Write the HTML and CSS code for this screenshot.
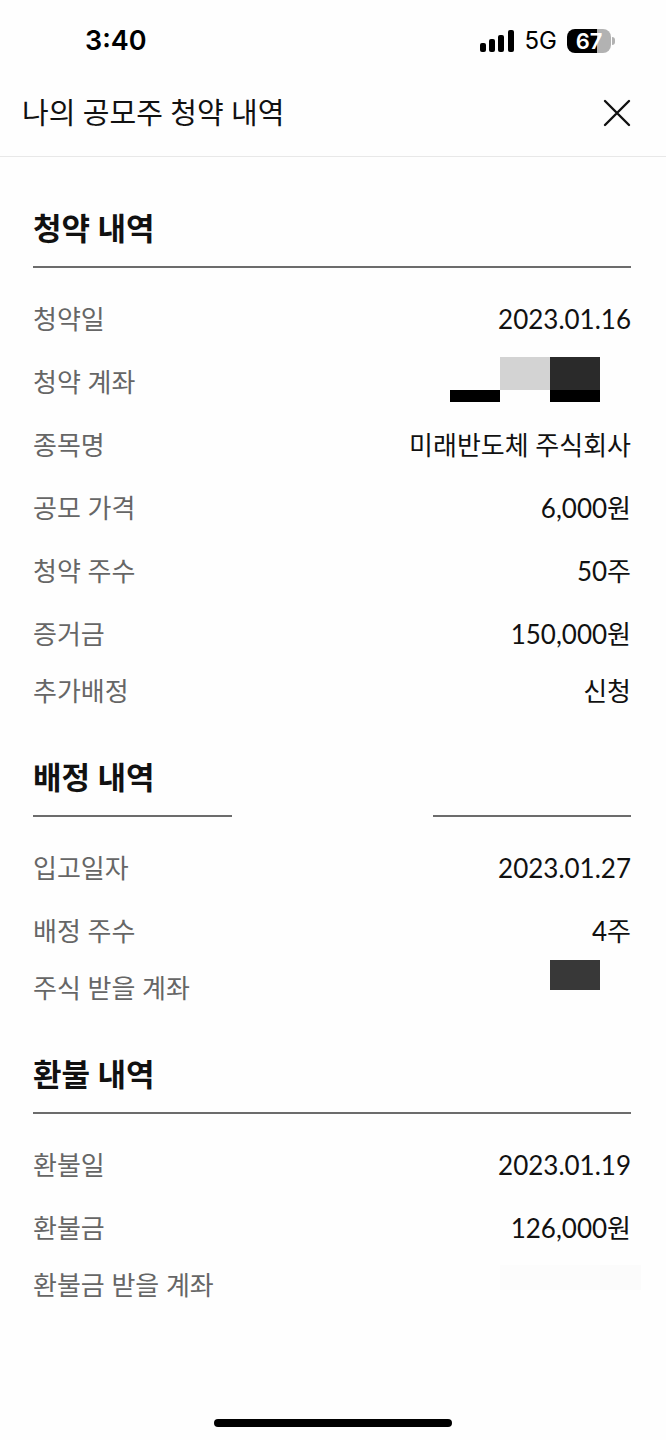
FILE: index.html
```html
<!DOCTYPE html>
<html lang="ko">
<head>
<meta charset="utf-8">
<meta name="viewport" content="width=device-width, initial-scale=1">
<title>나의 공모주 청약 내역</title>
<link rel="stylesheet" href="styles.css">
</head>
<body>
<div class="screen">
  <div class="status">
    <span class="time">3:40</span>
    <div class="indicators">
      <svg class="signal" width="34" height="22" viewBox="0 0 34 22" aria-hidden="true">
        <rect x="0" y="13" width="6" height="9" rx="2"/>
        <rect x="9" y="9" width="6" height="13" rx="2"/>
        <rect x="18" y="5" width="6" height="17" rx="2"/>
        <rect x="28" y="0" width="6" height="22" rx="2"/>
      </svg>
      <span class="network">5G</span>
      <div class="battery"><span class="level">67</span><span class="tip"></span></div>
    </div>
  </div>

  <header class="header">
    <h1 class="title">나의 공모주 청약 내역</h1>
    <button class="close" type="button" aria-label="닫기">
      <svg width="28" height="28" viewBox="0 0 28 28" aria-hidden="true"><path d="M2 2L26 26M26 2L2 26"/></svg>
    </button>
  </header>

  <main class="content">
    <section class="section">
      <h2 class="heading">청약 내역</h2>
      <dl class="list">
        <div class="row"><dt>청약일</dt><dd>2023.01.16</dd></div>
        <div class="row"><dt>청약 계좌</dt>
          <dd class="masked"><svg width="150" height="50" viewBox="0 0 150 50" shape-rendering="crispEdges" aria-hidden="true">
            <rect x="50" width="50" height="33" fill="#d3d3d3"/><rect x="100" width="50" height="33" fill="#2a2a2a"/>
            <rect y="33" width="50" height="12"/><rect x="100" y="33" width="50" height="12"/>
          </svg></dd></div>
        <div class="row"><dt>종목명</dt><dd>미래반도체 주식회사</dd></div>
        <div class="row"><dt>공모 가격</dt><dd>6,000원</dd></div>
        <div class="row"><dt>청약 주수</dt><dd>50주</dd></div>
        <div class="row"><dt>증거금</dt><dd>150,000원</dd></div>
        <div class="row"><dt>추가배정</dt><dd>신청</dd></div>
      </dl>
    </section>

    <section class="section">
      <h2 class="heading split">배정 내역</h2>
      <dl class="list">
        <div class="row"><dt>입고일자</dt><dd>2023.01.27</dd></div>
        <div class="row"><dt>배정 주수</dt><dd>4주</dd></div>
        <div class="row"><dt>주식 받을 계좌</dt>
          <dd class="masked"><svg width="50" height="56" viewBox="0 0 50 56" shape-rendering="crispEdges" aria-hidden="true"><rect width="50" height="30" fill="#383838"/></svg></dd></div>
      </dl>
    </section>

    <section class="section">
      <h2 class="heading">환불 내역</h2>
      <dl class="list">
        <div class="row"><dt>환불일</dt><dd>2023.01.19</dd></div>
        <div class="row"><dt>환불금</dt><dd>126,000원</dd></div>
        <div class="row"><dt>환불금 받을 계좌</dt>
          <dd class="masked wide"><svg width="141" height="42" viewBox="0 0 141 42" shape-rendering="crispEdges" aria-hidden="true"><rect y="1" width="100" height="25" fill="#fcfcfc"/><rect x="100" y="1" width="41" height="25" fill="#fbfbfb"/></svg></dd></div>
      </dl>
    </section>
  </main>

  <div class="home"></div>
</div>
</body>
</html>
```
FILE: styles.css
```css
* { box-sizing: border-box; }
body {
  margin: 0;
  background: #fefefe;
  color: #111;
  font-family: Lato, "Noto Sans CJK KR", sans-serif;
  font-size: 26px;
  line-height: 34px;
}
.screen {
  display: flex;
  flex-direction: column;
  min-height: 100vh;
}
.status {
  display: flex;
  align-items: center;
  justify-content: space-between;
  height: 69px;
  padding: 12px 51px 0 85px;
  color: #000;
  font-family: Inter, sans-serif;
}
.time { font-size: 27px; font-weight: 600; }
.indicators { display: flex; align-items: center; }
.signal { margin-right: 11px; }
.network { margin-right: 10px; font-size: 24px; }
.battery { display: flex; align-items: center; gap: 1px; }
.level {
  width: 44px;
  height: 24px;
  border-radius: 8px;
  background: linear-gradient(to right, #000 68%, #b2b2b2 68%);
  color: #fff;
  font-size: 22px;
  font-weight: 600;
  line-height: 24px;
  text-align: center;
}
.tip {
  width: 3px;
  height: 8px;
  border-radius: 0 3px 3px 0;
  background: #b2b2b2;
}
.header {
  display: flex;
  align-items: center;
  justify-content: space-between;
  height: 88px;
  padding: 0 35px 0 22px;
  border-bottom: 1px solid #e8e8e8;
}
.title {
  margin: 0;
  font-size: 29px;
  font-weight: 400;
  line-height: 40px;
}
.close {
  display: flex;
  padding: 0;
  border: 0;
  background: none;
  color: #111;
}
.close path {
  fill: none;
  stroke: currentColor;
  stroke-width: 2.4;
  stroke-linecap: round;
}
.content {
  flex: 1;
  padding: 47px 35px 0 33px;
}
.section { margin-bottom: 45px; }
.heading {
  margin: 0;
  padding-bottom: 14px;
  border-bottom: 2px solid #6c6c6c;
  font-size: 31px;
  font-weight: 700;
  line-height: 48px;
}
.split {
  border-image: linear-gradient(to right, #6c6c6c 33.4%, transparent 33.4% 66.8%, #6c6c6c 66.8%) 2;
}
.list {
  display: flex;
  flex-direction: column;
  gap: 17px;
  margin: 28px 0 0;
}
.row {
  display: flex;
  align-items: center;
  justify-content: space-between;
  height: 46px;
}
.row:last-child { height: 34px; }
dt { color: #666; }
dd { margin: 0; }
.masked { display: flex; margin-right: 31px; }
.wide { margin-right: -10px; }
.home {
  width: 238px;
  height: 8px;
  margin: 0 auto 13px;
  border-radius: 4px;
  background: #000;
}
```
